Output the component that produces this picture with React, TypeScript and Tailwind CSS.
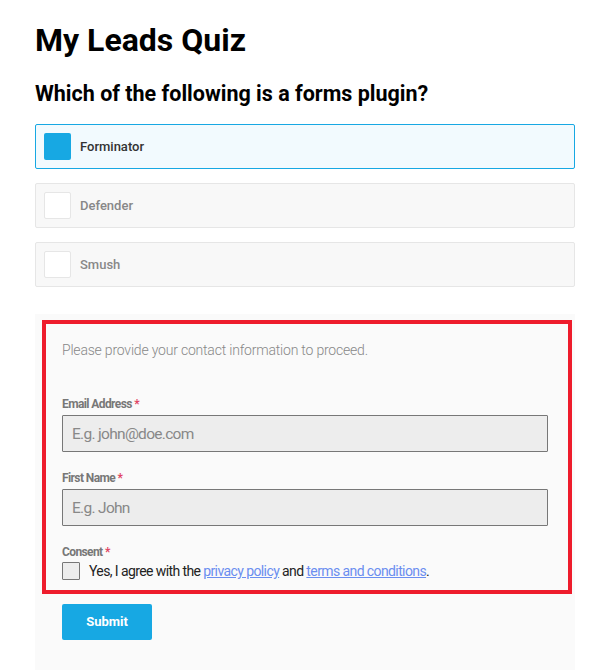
import React from "react";

const OPTIONS = [
  { label: "Forminator", checked: true },
  { label: "Defender", checked: false },
  { label: "Smush", checked: false },
];

function Option({ label, checked }: { label: string; checked: boolean }) {
  return (
    <div
      className={`flex h-[45px] items-center gap-[9px] rounded-[2px] border pl-[8px] ${
        checked ? "border-[#17a8e3] bg-[#f2fafe]" : "border-[#e6e6e6] bg-[#f8f8f8]"
      }`}
    >
      <span
        className={`h-[27px] w-[27px] rounded-[2px] ${
          checked ? "bg-[#17a8e3]" : "border border-[#e6e6e6] bg-white"
        }`}
      />
      <span className={`text-[13px] font-medium ${checked ? "text-[#333]" : "text-[#888]"}`}>{label}</span>
    </div>
  );
}

function Label({ children }: { children: React.ReactNode }) {
  return (
    <div className="text-[12px] font-bold leading-[16px] tracking-[-0.6px] text-[#777]">
      {children} <span className="text-[#e04562]">*</span>
    </div>
  );
}

function Field({ placeholder }: { placeholder: string }) {
  return (
    <input
      readOnly
      placeholder={placeholder}
      className="mt-[3px] h-[37px] w-[486px] rounded-[1px] border border-[#777] bg-[#ededed] px-[9px] text-[15.5px] tracking-[-0.7px] text-[#333] outline-none placeholder:text-[#888]"
    />
  );
}

export default function App() {
  return (
    <div className="min-h-[670px] bg-white pl-[35px] pt-[20px] text-black" style={{ fontFamily: "Roboto, 'Liberation Sans', sans-serif" }}>
      <div className="w-[540px]">
        <h1 className="text-[32px] font-bold leading-[40px]">My Leads Quiz</h1>
        <h2 className="mt-[20px] text-[21.5px] font-bold leading-[28px]">Which of the following is a forms plugin?</h2>

        <div className="mt-[16px] flex flex-col gap-[14px]">
          {OPTIONS.map((o) => (
            <Option key={o.label} label={o.label} checked={o.checked} />
          ))}
        </div>

        <div className="mt-[27px] h-[356px] bg-[#fafafa] pt-[6px]">
          <div className="ml-[7px] mr-[3px] border-4 border-[#ee1c2c] px-[16px] pb-[10px] pt-[16px]">
            <p className="text-[14px] font-light leading-[20px] tracking-[-0.2px] text-[#888]">
              Please provide your contact information to proceed.
            </p>

            <div className="mt-[36px]">
              <Label>Email Address</Label>
              <Field placeholder="E.g. john@doe.com" />
            </div>

            <div className="mt-[18px]">
              <Label>First Name</Label>
              <Field placeholder="E.g. John" />
            </div>

            <div className="mt-[18px]">
              <Label>Consent</Label>
              <div className="mt-[2px] flex items-center gap-[9px]">
                <span className="h-[18px] w-[18px] rounded-[1px] border border-[#777] bg-[#ededed]" />
                <span className="text-[14px] leading-[18px] tracking-[-0.6px] text-[#222]">
                  Yes, I agree with the{" "}
                  <a className="text-[#6b8ef0] underline">privacy policy</a> and{" "}
                  <a className="text-[#6b8ef0] underline">terms and conditions</a>.
                </span>
              </div>
            </div>
          </div>

          <button className="ml-[27px] mt-[10px] h-[36px] w-[90px] rounded-[2px] bg-[#17a8e3] text-[13px] font-bold text-white">
            Submit
          </button>
        </div>
      </div>
    </div>
  );
}
